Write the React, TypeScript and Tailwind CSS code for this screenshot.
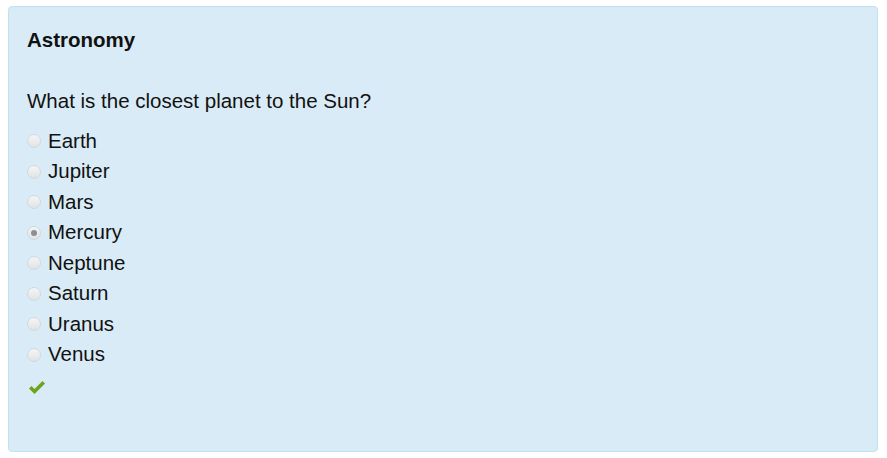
const planets = ["Earth", "Jupiter", "Mars", "Mercury", "Neptune", "Saturn", "Uranus", "Venus"]

function Radio({ checked }: { checked: boolean }) {
    return (
        <span className="flex h-[14px] w-[14px] items-center justify-center rounded-full border border-[#d4d8db] bg-[linear-gradient(#f4f5f6,#e0e3e5)]">
            {checked && <span className="h-[6px] w-[6px] rounded-full bg-[#8b8f93]" />}
        </span>
    )
}

export default function App() {
    const selected = "Mercury"

    return (
        <div className="px-[8px] pt-[6px] font-['Liberation_Sans',Arial,sans-serif] text-[#111]">
            <div className="h-[446px] w-[870px] rounded-[4px] border border-[#bfe1f1] bg-[#d9ebf6] px-[18px] pt-[20px]">
                <h3 className="text-[20.5px] font-bold leading-[26px]">Astronomy</h3>
                <p className="mt-[35px] text-[20.5px] leading-[26px]">What is the closest planet to the Sun?</p>
                <div className="mt-[12px] flex flex-col">
                    {planets.map(p => (
                        <label key={p} className="flex h-[30.5px] items-center gap-[7px] text-[20.5px]">
                            <Radio checked={p === selected} />
                            {p}
                        </label>
                    ))}
                </div>
                <svg className="ml-[1px] mt-[10px]" width="18" height="15" viewBox="0 0 18 15">
                    <path d="M1 8.5 L3.5 6 L6.5 9 L14.5 1 L17 3.5 L6.5 14 Z" fill="#6aa51c" />
                </svg>
            </div>
        </div>
    )
}
